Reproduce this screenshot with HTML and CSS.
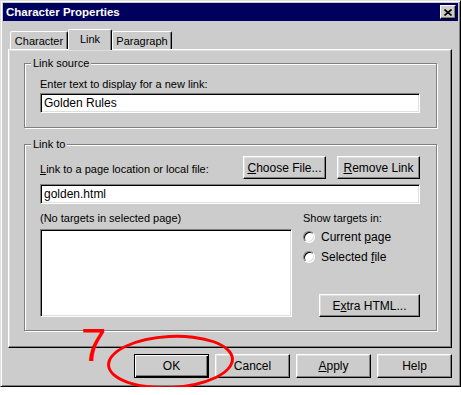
FILE: index.html
```html
<!DOCTYPE html>
<html lang="en">
<head>
    <meta charset="UTF-8">
    <title>Character Properties</title>
    <link rel="stylesheet" href="styles.css">
</head>
<body>
    <div class="window">
        <div class="titlebar">
            <span class="title">Character Properties</span>
            <span class="close-btn">
                <svg width="8" height="7" viewBox="0 0 8 7"><path d="M0.5 0.5 L7.5 6.5 M7.5 0.5 L0.5 6.5" stroke="#000" stroke-width="1.6" fill="none"/></svg>
            </span>
        </div>

        <div class="tabs">
            <div class="tab tab-character">Character</div>
            <div class="tab tab-link active">Link</div>
            <div class="tab tab-paragraph">Paragraph</div>
        </div>

        <div class="panel">
            <div class="group group-source">
                <div class="group-title">Link source</div>
                <div class="field-label">Enter text to display for a new link:</div>
                <div class="textbox">Golden Rules</div>
            </div>

            <div class="group group-target">
                <div class="group-title">Link to</div>
                <div class="file-row">
                    <div class="field-label file-label"><u>L</u>ink to a page location or local file:</div>
                    <div class="btn file-btn"><span><u>C</u>hoose File...</span></div>
                    <div class="btn file-btn"><span><u>R</u>emove Link</span></div>
                </div>
                <div class="textbox file-box">golden.html</div>

                <div class="targets">
                    <div class="targets-left">
                        <div class="field-label">(No targets in selected page)</div>
                        <div class="listbox"></div>
                    </div>
                    <div class="targets-right">
                        <div class="field-label">Show targets in:</div>
                        <div class="radio-row first"><span class="radio"></span><span>Current <u>p</u>age</span></div>
                        <div class="radio-row"><span class="radio"></span><span>Selected <u>f</u>ile</span></div>
                        <div class="btn extra-btn"><span>E<u>x</u>tra HTML...</span></div>
                    </div>
                </div>
            </div>
        </div>

        <div class="dialog-buttons">
            <div class="btn dlg-btn default">OK</div>
            <div class="btn dlg-btn">Cancel</div>
            <div class="btn dlg-btn"><span><u>A</u>pply</span></div>
            <div class="btn dlg-btn">Help</div>
        </div>

        <!-- red pen marks drawn over the screenshot -->
        <div class="mark-number">7</div>
        <div class="mark-ring"></div>
    </div>
</body>
</html>
```

FILE: styles.css
```css
body {
    margin: 0;
    background: #ffffff;
    font-family: "Liberation Sans", Arial, sans-serif;
    font-size: 11px;
    color: #000;
}

.window {
    position: relative;
    width: 461px;
    height: 387px;
    box-sizing: border-box;
    background: #cccccc;
    border: 1px solid;
    border-color: #dfdfdf #000 #000 #dfdfdf;
    box-shadow: inset 1px 1px 0 #fff, inset -1px -1px 0 #808080;
    padding: 2px;
}

.titlebar {
    height: 18px;
    background: #00005e;
    display: flex;
    justify-content: space-between;
    align-items: center;
    padding: 0 2px 0 3px;
}

.title {
    color: #fff;
    font-weight: bold;
    font-size: 11.5px;
}

.close-btn {
    width: 16px;
    height: 14px;
    box-sizing: border-box;
    background: #cccccc;
    border: 1px solid;
    border-color: #fff #000 #000 #fff;
    box-shadow: inset -1px -1px 0 #808080;
    display: flex;
    align-items: center;
    justify-content: center;
}

.tabs {
    display: flex;
    align-items: flex-end;
    height: 20px;
    margin: 8px 0 0 7px;
    position: relative;
    z-index: 1;
}

.tab {
    height: 18px;
    box-sizing: border-box;
    border: 1px solid;
    border-bottom: none;
    border-color: #fff #000 transparent #fff;
    box-shadow: inset -1px 0 0 #808080;
    border-radius: 2px 2px 0 0;
    background: #cccccc;
    display: flex;
    align-items: center;
    justify-content: center;
    padding-top: 1px;
}

.tab-character { width: 58px; }
.tab-link { width: 44px; }
.tab-paragraph { width: 60px; }

.tab.active {
    height: 21px;
    margin-bottom: -1px;
    padding-bottom: 3px;
}

.panel {
    height: 299px;
    margin: 0 6px 0 5px;
    box-sizing: border-box;
    border: 1px solid;
    border-color: #fff #000 #000 #fff;
    box-shadow: inset -1px -1px 0 #808080, inset 1px 1px 0 #dfdfdf;
    padding: 13px 14px 0 15px;
}

.group {
    border: 1px solid #808080;
    box-shadow: 1px 1px 0 #fff, inset 1px 1px 0 #fff;
    padding: 0 16px 14px 15px;
}

.group-title {
    width: fit-content;
    margin: -7px 0 0 -9px;
    padding: 0 2px;
    line-height: 13px;
    background: #cccccc;
}

.group-target {
    margin-top: 16px;
    padding-bottom: 13px;
}

.field-label {
    line-height: 13px;
}

.group-source .field-label {
    margin-top: 8px;
    margin-bottom: 2px;
}

.textbox {
    height: 20px;
    box-sizing: border-box;
    background: #fff;
    border: 1px solid;
    border-color: #808080 #fff #fff #808080;
    box-shadow: inset 1px 1px 0 #000, inset -1px -1px 0 #dfdfdf;
    padding: 3px 0 0 3px;
    line-height: 13px;
    font-size: 12px;
}

.btn {
    box-sizing: border-box;
    background: #cccccc;
    border: 1px solid;
    border-color: #fff #000 #000 #fff;
    box-shadow: inset -1px -1px 0 #808080, inset 1px 1px 0 #dfdfdf;
    display: flex;
    align-items: center;
    justify-content: center;
    font-size: 12px;
}

.file-row {
    display: flex;
    align-items: flex-end;
    margin-top: 5px;
}

.file-label {
    flex: 1;
    margin-bottom: 3px;
}

.file-btn {
    width: 83px;
    height: 23px;
    margin-left: 11px;
}

.file-box {
    margin-top: 5px;
}

.targets {
    display: flex;
    gap: 11px;
    margin-top: 8px;
}

.targets-left {
    width: 252px;
}

.listbox {
    height: 88px;
    margin-top: 4px;
    box-sizing: border-box;
    background: #fff;
    border: 1px solid;
    border-color: #808080 #fff #fff #808080;
    box-shadow: inset 1px 1px 0 #000, inset -1px -1px 0 #dfdfdf;
}

.targets-right {
    flex: 1;
    display: flex;
    flex-direction: column;
}

.radio-row {
    height: 20px;
    display: flex;
    align-items: center;
    font-size: 12px;
}

.radio-row.first {
    margin-top: 2px;
}

.radio {
    width: 12px;
    height: 12px;
    box-sizing: border-box;
    border-radius: 50%;
    background: #fff;
    border: 1px solid;
    border-color: #808080 #fff #fff #808080;
    box-shadow: inset 1px 1px 0 #000, inset -1px -1px 0 #dfdfdf;
    margin-right: 6px;
}

.extra-btn {
    width: 101px;
    height: 23px;
    margin-top: auto;
    align-self: flex-end;
}

.dialog-buttons {
    display: flex;
    justify-content: flex-end;
    gap: 6px;
    margin: 6px 6px 0 0;
}

.dlg-btn {
    width: 75px;
    height: 24px;
}

.dlg-btn.default {
    border-color: #000;
    box-shadow: inset 1px 1px 0 #fff, inset -1px -1px 0 #000, inset -2px -2px 0 #808080;
}

.mark-number {
    position: absolute;
    left: 80px;
    top: 321px;
    font-size: 46px;
    line-height: 1;
    color: #f00;
}

.mark-ring {
    position: absolute;
    left: 106px;
    top: 334px;
    width: 127px;
    height: 54px;
    box-sizing: border-box;
    border: 3px solid #f00;
    border-radius: 50%;
    transform: rotate(-3deg);
}
```
